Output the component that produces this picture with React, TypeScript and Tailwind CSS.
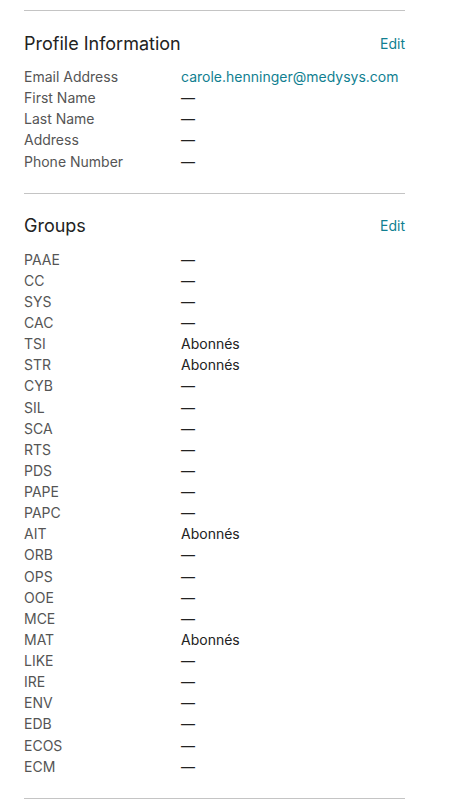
const profile: [string, string][] = [
  ["Email Address", "carole.henninger@medysys.com"],
  ["First Name", "—"],
  ["Last Name", "—"],
  ["Address", "—"],
  ["Phone Number", "—"],
];

const groups: [string, string][] = [
  ["PAAE", "—"],
  ["CC", "—"],
  ["SYS", "—"],
  ["CAC", "—"],
  ["TSI", "Abonnés"],
  ["STR", "Abonnés"],
  ["CYB", "—"],
  ["SIL", "—"],
  ["SCA", "—"],
  ["RTS", "—"],
  ["PDS", "—"],
  ["PAPE", "—"],
  ["PAPC", "—"],
  ["AIT", "Abonnés"],
  ["ORB", "—"],
  ["OPS", "—"],
  ["OOE", "—"],
  ["MCE", "—"],
  ["MAT", "Abonnés"],
  ["LIKE", "—"],
  ["IRE", "—"],
  ["ENV", "—"],
  ["EDB", "—"],
  ["ECOS", "—"],
  ["ECM", "—"],
];

function Section({ title, rows, accentFirst }: { title: string; rows: [string, string][]; accentFirst?: boolean }) {
  return (
    <section className="pt-[20px] pb-[21px] border-b border-[#c4c4c4]">
      <div className="flex items-center justify-between h-[24px] mb-[11px]">
        <h2 className="text-[18px] text-[#222]">{title}</h2>
        <button className="text-[14px] text-[#117f91]">Edit</button>
      </div>
      <dl>
        {rows.map(([label, value], i) => (
          <div key={label} className="flex h-[21.125px] items-center text-[14px]">
            <dt className="w-[157px] text-[#555]">{label}</dt>
            <dd className={accentFirst && i === 0 ? "text-[#117f91]" : "text-[#222]"}>{value}</dd>
          </div>
        ))}
      </dl>
    </section>
  );
}

export default function App() {
  return (
    <div className="bg-white min-h-screen pt-[10px] px-6" style={{ fontFamily: "Inter, 'Noto Sans', sans-serif" }}>
      <div className="w-[381px] border-t border-[#c4c4c4]">
        <Section title="Profile Information" rows={profile} accentFirst />
        <Section title="Groups" rows={groups} />
      </div>
    </div>
  );
}
